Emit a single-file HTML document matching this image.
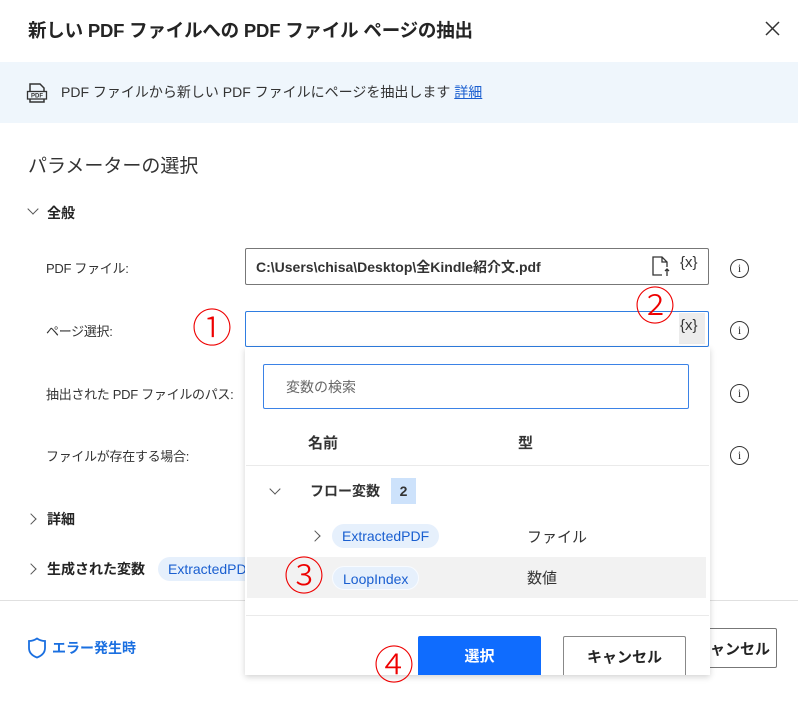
<!DOCTYPE html>
<html><head><meta charset="utf-8"><style>
*{margin:0;padding:0;box-sizing:border-box}
body{width:798px;height:711px;background:#fff;position:relative;overflow:hidden;font-family:"Liberation Sans","Noto Sans CJK JP",sans-serif;color:#242424}
.a{position:absolute;white-space:nowrap}
.lbl{font-size:13px;color:#333;left:46px;letter-spacing:-0.3px}
.b{font-weight:bold}
.info{width:19px;height:19px;border:1.5px solid #333;border-radius:50%;font-size:12px;text-align:center;line-height:16px;font-family:"Liberation Serif",serif;color:#333;left:730px}
.num{color:#e00;font-size:40px;line-height:40px;font-family:"Noto Sans CJK JP",sans-serif;font-weight:300}
.pill{background:#e6f0fc;color:#1a5fd0;border-radius:12px;font-size:14px;height:24px;line-height:24px;padding:0 10px}
.chev{width:8px;height:8px;border-right:1.5px solid #555;border-bottom:1.5px solid #555}
</style></head><body>
<div class="a b" style="left:28px;top:17px;font-size:18.5px;letter-spacing:-0.2px">新しい PDF ファイルへの PDF ファイル ページの抽出</div>
<svg class="a" style="left:765px;top:21px" width="15" height="15" viewBox="0 0 15 15"><path d="M1 1L14 14M14 1L1 14" stroke="#333" stroke-width="1.5"/></svg>
<div class="a" style="left:0;top:62px;width:798px;height:61px;background:#eff6fc"></div>
<svg class="a" style="left:26px;top:82px" width="22" height="22" viewBox="0 0 22 22"><path d="M4 9V2h10l4 4v3M4 17v3h14v-3" fill="none" stroke="#333" stroke-width="1.5"/><rect x="1.5" y="9.5" width="19" height="7.5" fill="none" stroke="#333" stroke-width="1.3"/><text x="11" y="15.5" font-size="6" font-weight="bold" text-anchor="middle" fill="#333" font-family="Liberation Sans">PDF</text></svg>
<div class="a" style="left:61px;top:82px;font-size:14px;color:#333">PDF ファイルから新しい PDF ファイルにページを抽出します <span style="color:#1a5fd0;text-decoration:underline">詳細</span></div>
<div class="a" style="left:28px;top:151px;font-size:19px;color:#333">パラメーターの選択</div>
<div class="a chev" style="left:29px;top:205px;transform:rotate(45deg)"></div>
<div class="a b" style="left:47px;top:203px;font-size:14px">全般</div>
<div class="a lbl" style="top:258px">PDF ファイル:</div>
<div class="a lbl" style="top:321px">ページ選択:</div>
<div class="a lbl" style="top:384px">抽出された PDF ファイルのパス:</div>
<div class="a lbl" style="top:446px">ファイルが存在する場合:</div>
<div class="a" style="left:245px;top:248px;width:464px;height:37px;border:1px solid #777;border-radius:2px"></div>
<div class="a" style="left:256px;top:257px;font-size:14px;font-weight:bold;color:#333">C:\Users\chisa\Desktop\全Kindle紹介文.pdf</div>
<svg class="a" style="left:650px;top:255px" width="22" height="22" viewBox="0 0 22 22"><path d="M12 20H3V2h9l5 5v5M12 2v5h5M17 14v7M15 16l2-2 2 2" fill="none" stroke="#333" stroke-width="1.3"/></svg>
<div class="a" style="left:680px;top:254px;font-size:15px;color:#333">{x}</div>
<div class="a" style="left:245px;top:311px;width:464px;height:36px;border:1px solid #2f7de1;border-radius:2px"></div>
<div class="a" style="left:679px;top:313px;width:26px;height:31px;background:#ececec"></div>
<div class="a" style="left:680px;top:317px;font-size:15px;color:#333">{x}</div>
<div class="a info" style="top:259px">i</div>
<div class="a info" style="top:321px">i</div>
<div class="a info" style="top:384px">i</div>
<div class="a info" style="top:446px">i</div>
<div class="a chev" style="left:27px;top:515px;transform:rotate(-45deg)"></div>
<div class="a b" style="left:47px;top:509px;font-size:14px">詳細</div>
<div class="a chev" style="left:27px;top:565px;transform:rotate(-45deg)"></div>
<div class="a b" style="left:47px;top:559px;font-size:14px">生成された変数</div>
<div class="a pill" style="left:158px;top:557px;width:100px">ExtractedPDF</div>
<div class="a" style="left:0;top:600px;width:798px;height:1px;background:#e0e0e0"></div>
<svg class="a" style="left:27px;top:637px" width="20" height="22" viewBox="0 0 20 22"><path d="M10 1.5C7 3.5 4.5 4 2 4v7c0 5 4 8 8 9.5 4-1.5 8-4.5 8-9.5V4c-2.5 0-5-.5-8-2.5z" fill="none" stroke="#1a6fe0" stroke-width="1.8"/></svg>
<div class="a b" style="left:52px;top:638px;font-size:14px;color:#1a6fe0">エラー発生時</div>
<div class="a" style="left:620px;top:628px;width:157px;height:40px;border:1px solid #777;border-radius:2px"></div>
<div class="a b" style="left:695px;top:638px;font-size:15px">キャンセル</div>
<!-- dropdown -->
<div class="a" style="left:245px;top:347px;width:465px;height:328px;background:#fff;box-shadow:0 2px 6px rgba(0,0,0,.18)"></div>
<div class="a" style="left:263px;top:364px;width:426px;height:45px;border:1px solid #3b82e6;border-radius:2px"></div>
<div class="a" style="left:286px;top:377px;font-size:14px;color:#666">変数の検索</div>
<div class="a b" style="left:308px;top:432px;font-size:15px;color:#333">名前</div>
<div class="a b" style="left:518px;top:432px;font-size:15px;color:#333">型</div>
<div class="a" style="left:246px;top:465px;width:463px;height:1px;background:#eaeaea"></div>
<div class="a chev" style="left:271px;top:485px;transform:rotate(45deg)"></div>
<div class="a b" style="left:310px;top:481px;font-size:14px;color:#333">フロー変数</div>
<div class="a b" style="left:391px;top:478px;width:25px;height:26px;background:#cde2fb;font-size:14px;text-align:center;line-height:26px;color:#333">2</div>
<div class="a chev" style="left:311px;top:532px;transform:rotate(-45deg)"></div>
<div class="a pill" style="left:332px;top:524px">ExtractedPDF</div>
<div class="a" style="left:527px;top:526px;font-size:15px;color:#333">ファイル</div>
<div class="a" style="left:247px;top:557px;width:459px;height:41px;background:#f2f2f2"></div>
<div class="a pill" style="left:332px;top:566px;border:1px solid #f8fbff">LoopIndex</div>
<div class="a" style="left:527px;top:567px;font-size:15px;color:#333">数値</div>
<div class="a" style="left:246px;top:615px;width:463px;height:1px;background:#eaeaea"></div>
<div class="a b" style="left:418px;top:636px;width:123px;height:39px;background:#0f6cfe;border-radius:2px 2px 0 0;color:#fff;font-size:15px;text-align:center;line-height:42px">選択</div>
<div class="a b" style="left:563px;top:636px;width:123px;height:39px;border:1px solid #888;border-bottom:none;border-radius:2px 2px 0 0;font-size:15px;text-align:center;line-height:42px">キャンセル</div>
<div class="a num" style="left:192px;top:305px">①</div>
<div class="a num" style="left:635px;top:283px">②</div>
<div class="a num" style="left:284px;top:553px">③</div>
<div class="a num" style="left:374px;top:642px">④</div>
</body></html>
